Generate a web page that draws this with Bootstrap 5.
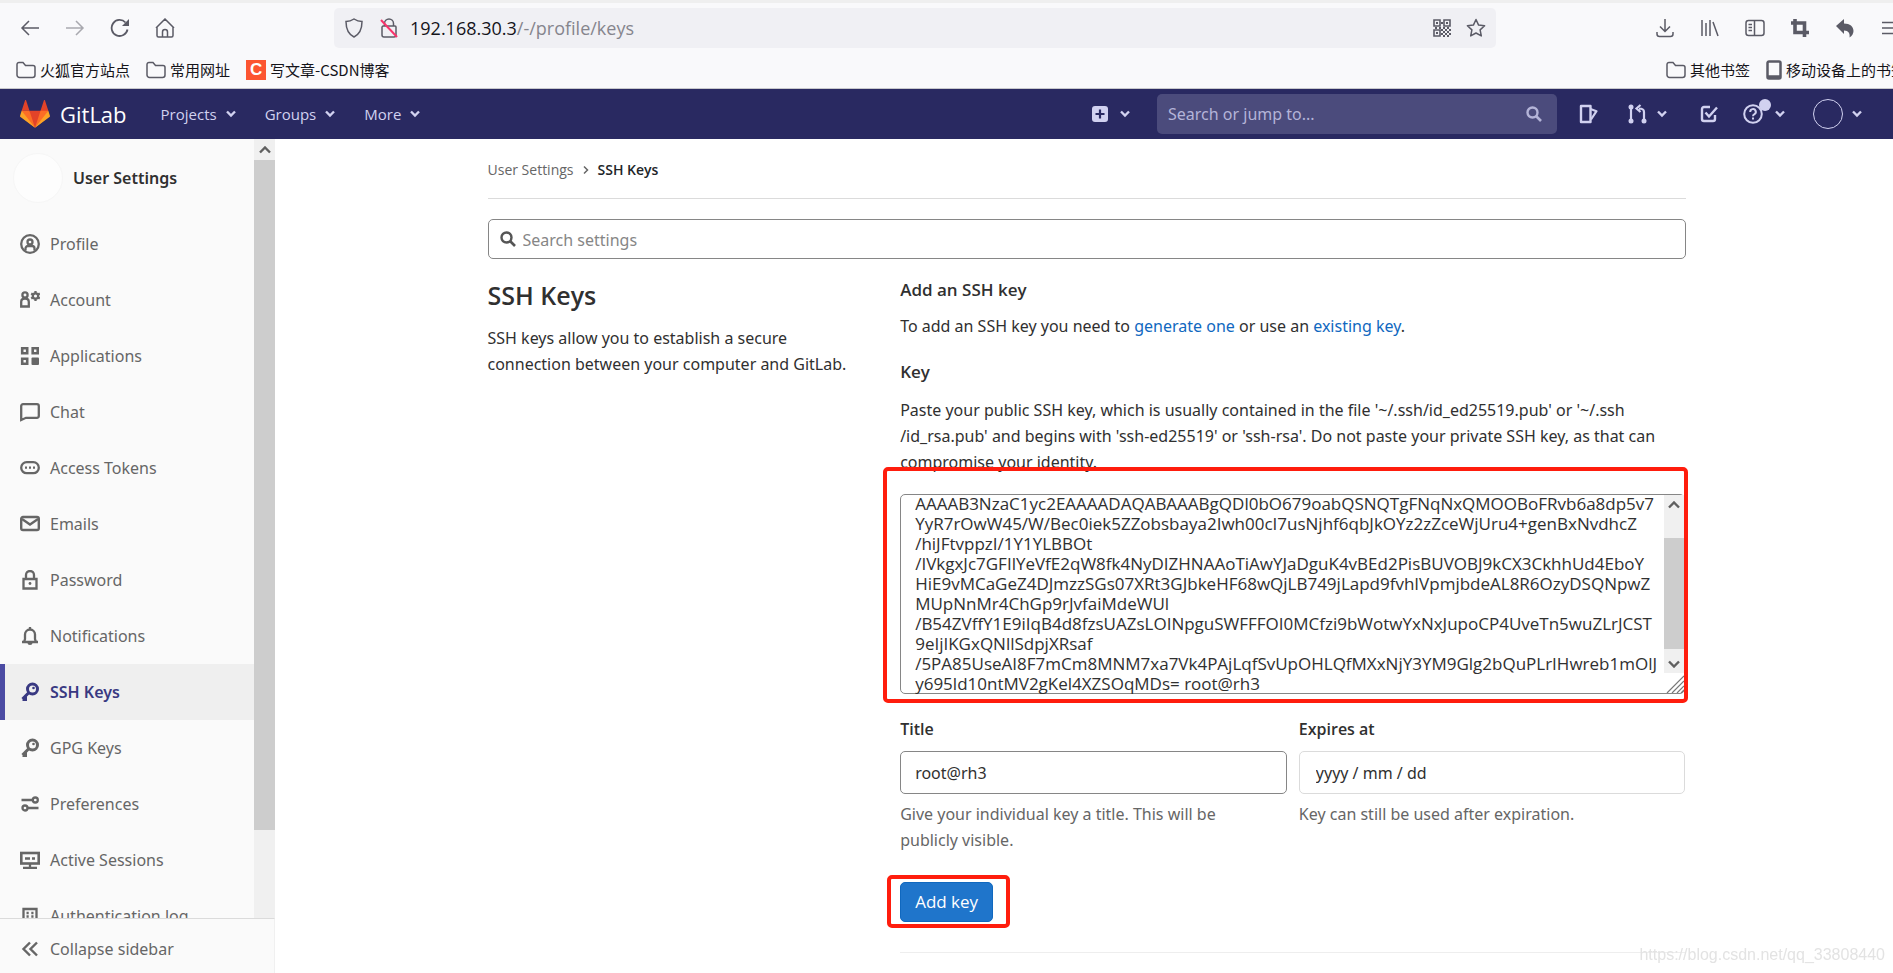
<!DOCTYPE html>
<html lang="en">
<head>
<meta charset="utf-8">
<meta name="viewport" content="width=device-width, initial-scale=1">
<title>SSH Keys · User Settings · GitLab</title>
<link href="https://cdn.jsdelivr.net/npm/bootstrap@5.3.0/dist/css/bootstrap.min.css" rel="stylesheet">
<style>
  :root { --ui: "Open Sans", "Noto Sans CJK SC", sans-serif; --prose: "Noto Sans", "Open Sans", sans-serif; --ink: #303030; --muted: #666; }
  body { font-family: var(--ui); font-size: 16px; line-height: 26px; color: var(--ink); height: 100vh; overflow: hidden; background: #fff; }
  svg { display: block; flex: none; fill: none; stroke: currentColor; stroke-width: 2; }
  button, a { color: inherit; }
  .plain { background: none; border: 0; padding: 0; text-decoration: none; }

  /* browser chrome */
  .chrome { background: #f9f9fb; border-top: 3px solid #efefef; border-bottom: 1px solid #c8c8cc; color: #5b5b66; height: 89px; }
  .chrome svg { stroke-width: 1.5; }
  .tools { height: 50px; padding-left: 20px; }
  .tools-start { gap: 25px; }
  .tools-end { gap: 25px; }
  .address { background: #f0f0f4; border-radius: 5px; height: 40px; margin: 0 159px; padding: 0 10px; min-width: 0; gap: 15px; }
  .address-text { font-size: 18px; margin-left: -4px; }
  .url-host { color: #15141a; }
  .url-path { color: #85858d; }
  .marks { font-family: "Noto Sans CJK SC", sans-serif; font-size: 15px; line-height: 22px; color: #15141a; padding: 6px 0 0 16px; }
  .marks svg { color: #5b5b66; }
  .marks a { gap: 4px; }
  .mobile-mark { width: 127px; overflow: hidden; }
  .csdn { width: 20px; height: 20px; background: #fc5531; color: #fff; font: bold 17px/20px "Liberation Sans", sans-serif; text-align: center; }

  /* top bar */
  .topbar { background: #292961; color: #d1d1f0; height: 50px; font-size: 15px; padding: 0 31px 0 20px; }
  .brand { color: #fff; font-size: 22px; font-weight: 500; gap: 10px; margin-right: 34px; }
  .topmenu { gap: 29px; }
  .topmenu .plain { gap: 9px; }
  .quick { gap: 12px; }
  .jump { background: #4b4b7c; border-radius: 5px; width: 400px; height: 40px; padding: 0 15px 0 11px; margin: 0 22px 0 27px; }
  .jump input { background: none; border: 0; outline: 0; color: #fff; font-family: var(--prose); font-size: 16px; padding: 0; min-width: 0; }
  .jump input::placeholder { color: #b4b4d8; opacity: 1; }
  .jump svg { color: #b4b4d8; }
  .merge, .todo { margin-left: 28px; }
  .account { margin-left: 25px; gap: 9px; }
  .avatar-ring { width: 30px; height: 30px; border: 1px solid #d1d1f0; border-radius: 50%; margin-left: 3px; }
  .dot { width: 12px; height: 12px; background: #d1d1f0; border-radius: 50%; top: -5px; right: -8px; }

  /* sidebar */
  .side { width: 275px; background: #fafafa; color: var(--muted); font-family: var(--prose); }
  .side svg { stroke-width: 2.3; }
  .side-head { height: 77px; padding: 0 13px; gap: 10px; color: var(--ink); font-weight: 600; }
  .side-avatar { width: 50px; height: 50px; background: #fdfdfd; border: 1px solid #f6f6f6; border-radius: 50%; }
  .side .nav-link { height: 56px; padding: 0 20px; gap: 10px; color: var(--muted); }
  .side .nav-link.active { background: #efefef; color: #393982; font-weight: 600; border-left: 5px solid #4b4ba3; padding-left: 15px; }
  .collapse-bar { height: 55px; border-top: 1px solid #dbdbdb; border-right: 1px solid #f0f0f0; padding: 5px 20px 0; gap: 10px; color: var(--muted); background: #fafafa; }
  .scroll { background: #f0f0f0; color: #606060; flex: none; }
  .scroll-side { width: 21px; }
  .scroll-side .thumb { background: #cdcdcd; height: 86%; }
  .scroll-btn { height: 21px; display: grid; place-items: center; }

  /* content */
  .content { --bs-gutter-x: 40px; max-width: 1238px; }
  .sections { --bs-gutter-x: 40px; font-family: var(--prose); }
  .main { padding-left: 5px; }
  .breadcrumb { --bs-breadcrumb-margin-bottom: 0; font-size: 14px; line-height: 20px; padding: 21px 0 18px; border-bottom: 1px solid #dbdbdb; gap: 8px; color: var(--muted); }
  .boxed { border: 1px solid #868686; border-radius: 5px; background: #fff; }
  .find { height: 40px; margin: 20px 0 18px; padding: 0 11px; gap: 7px; }
  .find input { border: 0; outline: 0; padding: 2px 0 0; font-family: var(--prose); }
  .find input::placeholder { color: #868686; opacity: 1; }
  h1 { font-family: var(--ui); font-size: 25px; line-height: 30px; font-weight: 600; margin: 3px 0 15px; }
  h2, label { font-family: var(--ui); font-size: 17px; line-height: 26px; font-weight: 600; }
  h2 { margin: 0 0 10px; }
  .text-link { color: #1068bf; text-decoration: none; }
  .key-box { height: 200px; margin: 19px 0 22px; }
  .key-box textarea { border: 0; outline: 0; resize: none; overflow: hidden; white-space: pre; margin: -1px 0; padding: 0 0 0 14px; font-family: var(--ui); font-size: 17px; line-height: 20px; color: var(--ink); background: none; min-width: 0; }
  .scroll-key { width: 20px; margin-bottom: 20px; }
  .scroll-key .thumb { background: #cdcdcd; height: 111px; margin-top: 24px; }
  .scroll-key .scroll-btn { height: 19px; }
  .grip { right: 0; bottom: 0; color: #777; }
  .outline-red { border: 4px solid #ff1d0d; border-radius: 5px; pointer-events: none; }
  .around-key { inset: -28px -4px -10px -18px; }
  .around-add { inset: -7px -17px -6px -13px; }
  .fields { --bs-gutter-x: 12px; }
  .fields label { font-size: 16px; }
  .fields input { height: 43px; padding: 0 14px; width: 100%; color: var(--ink); margin: 9px 0 7px; display: block; }
  .fields .soft { border-color: #dbdbdb; padding-left: 16px; }
  .hint { color: var(--muted); }
  .add-slot { margin-top: 29px; }
  .add { background: #1f75cb; border: 1px solid #1068bf; border-radius: 5px; color: #fff; height: 40px; padding: 0 14px; font-family: var(--ui); font-size: 17px; }
  .rule { border-top: 1px solid #eee; margin-top: 30px; }
  .watermark { right: 8px; bottom: 5px; font: 16px/26px "Liberation Sans", sans-serif; color: #e3e3e3; }
</style>
</head>
<body class="d-flex flex-column">

<svg width="0" height="0" class="position-absolute">
  <symbol id="down" viewBox="0 0 10 8"><path d="M1 1.500l4 4 4-4" stroke-width="2.400"/></symbol>
  <symbol id="lens" viewBox="0 0 16 16"><circle cx="6.500" cy="6.500" r="5" stroke-width="2.400"/><path d="M10 10l5 5" stroke-width="2.600"/></symbol>
  <symbol id="folder" viewBox="0 0 20 18"><path d="M1 14V3.500a2 2 0 0 1 2-2h4l2.500 3H17a2 2 0 0 1 2 2V14a2.500 2.500 0 0 1-2.500 2.500h-13A2.500 2.500 0 0 1 1 14z"/></symbol>
  <symbol id="keyicon" viewBox="0 0 20 20"><circle cx="12.500" cy="7" r="5" stroke-width="3"/><circle cx="13.500" cy="6" r="1.300" fill="currentColor" stroke="none"/><path d="M8.700 10.700L2.500 17M2.500 17.500h3v-3" stroke-width="3"/></symbol>
</svg>

<header class="chrome flex-shrink-0">
  <div class="tools d-flex align-items-center">
    <div class="tools-start d-flex">
      <button class="plain" aria-label="Back"><svg width="20" height="20"><path d="M19 10H2M9 3L2 10l7 7"/></svg></button>
      <button class="plain opacity-50" aria-label="Forward"><svg width="20" height="20"><path d="M1 10h17M11 3l7 7-7 7"/></svg></button>
      <button class="plain" aria-label="Reload"><svg width="20" height="20"><path d="M17.500 11.500A8 8 0 1 1 15.500 4.500" stroke-width="1.800"/><path d="M19 1v7h-7z" fill="currentColor" stroke="none"/></svg></button>
      <button class="plain" aria-label="Home"><svg width="20" height="20"><path d="M2 9v8.500a1.500 1.500 0 0 0 1.500 1.500h13a1.500 1.500 0 0 0 1.500-1.500V9M1 10l9-9 9 9M7.500 19v-5a2.500 2.500 0 0 1 5 0v5"/></svg></button>
    </div>
    <div class="address flex-grow-1 d-flex align-items-center">
      <svg width="20" height="20"><path d="M10 1c3 2 6 2.500 8 2.500 0 8-3 13-8 15.500C5 16.500 2 11.500 2 3.500 4 3.500 7 3 10 1z"/></svg>
      <svg width="20" height="20"><path d="M5.500 8V5.500a4.500 4.500 0 0 1 9 0V8M4 8h12a1 1 0 0 1 1 1v8a2 2 0 0 1-2 2H5a2 2 0 0 1-2-2V9z"/><path d="M2 2l16 17" stroke="#f9336b" stroke-width="2"/></svg>
      <div class="address-text flex-grow-1 text-nowrap"><span class="url-host">192.168.30.3</span><span class="url-path">/-/profile/keys</span></div>
      <button class="plain" aria-label="QR code"><svg width="18" height="18"><path d="M1 1h6v6H1zM11 1h6v6h-6zM1 11h6v6H1z" stroke-width="1.600"/><path d="M3 3h2v2H3zM13 3h2v2h-2zM3 13h2v2H3zM8 3h2v2H8zM2 8h2v2H2zM6 8h2v2H6zM10 8h2v2h-2zM14 8h2v2h-2zM8 10h2v2H8zM12 10h2v2h-2zM16 10h2v2h-2zM10 12h2v2h-2zM14 12h2v2h-2zM8 14h2v2H8zM12 14h2v2h-2zM16 14h2v2h-2zM10 16h2v2h-2zM14 16h2v2h-2z" fill="currentColor" stroke="none"/></svg></button>
      <button class="plain" aria-label="Bookmark"><svg width="20" height="20"><path d="M10 1.500l2.600 5.600 6 .7-4.500 4.100 1.200 6L10 15l-5.300 2.900 1.200-6L1.400 7.800l6-.7z" stroke-linejoin="round"/></svg></button>
    </div>
    <div class="tools-end d-flex">
      <button class="plain" aria-label="Downloads"><svg width="20" height="20"><path d="M10 1v12M5 8.500l5 5 5-5M2 14v2a2.500 2.500 0 0 0 2.500 2.500h11A2.500 2.500 0 0 0 18 16v-2"/></svg></button>
      <button class="plain" aria-label="Library"><svg width="20" height="20"><path d="M2 2v16M6 5v13M10 2v16M13 4l5 14"/></svg></button>
      <button class="plain" aria-label="Sidebars"><svg width="20" height="20"><rect x="1" y="2.500" width="18" height="15" rx="2.500"/><path d="M9.500 3v14M3.500 6.500h3.500M3.500 9.500h3.500M3.500 12.500h3.500"/></svg></button>
      <button class="plain" aria-label="Screenshot"><svg width="20" height="20"><path d="M5 1v13.500h14M1 5h13.500v14" stroke-width="3.600"/></svg></button>
      <button class="plain" aria-label="Undo"><svg width="20" height="20"><path d="M1 8l8-7v4.500c6 0 9.500 3 9.500 7.500 0 2.500-1.500 5-4 6.500.8-4-1-7-5.500-7V16z" fill="currentColor" stroke="none"/></svg></button>
      <button class="plain" aria-label="Menu"><svg width="13" height="20"><path d="M2 4.500h11M2 10h11M2 15.500h11"/></svg></button>
    </div>
  </div>
  <nav class="marks d-flex align-items-center text-nowrap" aria-label="Bookmarks">
    <a href="#" class="plain d-flex align-items-center me-3"><svg width="20" height="18"><use href="#folder"/></svg>火狐官方站点</a>
    <a href="#" class="plain d-flex align-items-center me-3"><svg width="20" height="18"><use href="#folder"/></svg>常用网址</a>
    <a href="#" class="plain d-flex align-items-center me-auto"><span class="csdn">C</span>写文章-CSDN博客</a>
    <a href="#" class="plain d-flex align-items-center me-3"><svg width="20" height="18"><use href="#folder"/></svg>其他书签</a>
    <a href="#" class="plain d-flex align-items-center mobile-mark"><svg width="16" height="20"><path d="M3 1.500h10a1.500 1.500 0 0 1 1.500 1.500v14a1.500 1.500 0 0 1-1.500 1.500H3A1.500 1.500 0 0 1 1.500 17V3A1.500 1.500 0 0 1 3 1.500zM2 16.500h12" stroke-width="2.500"/></svg>移动设备上的书签</a>
  </nav>
</header>

<nav class="topbar d-flex align-items-center flex-shrink-0" aria-label="Main">
  <a href="#" class="plain brand d-flex align-items-center">
    <svg width="30" height="30" viewBox="0 0 36 36"><g stroke="none"><path fill="#e24329" d="M2 14l9.380 9v-9l-4-12.280c-.205-.632-1.176-.632-1.380 0zM34 14l-9.380 9v-9l4-12.280c.205-.632 1.176-.632 1.380 0zM18 34.380L3 14h30z"/><path fill="#fc6d26" d="M18 34.380L11.380 14H2l4 11zM18 34.380L24.620 14H34l-4 11z"/><path fill="#fca326" d="M2 14L.1 20.160c-.18.565 0 1.200.5 1.560l17.420 12.660zM34 14l1.900 6.160c.18.565 0 1.200-.5 1.560L18 34.380z"/></g></svg>
    GitLab</a>
  <div class="topmenu d-flex me-auto">
    <button class="plain d-flex align-items-center">Projects <svg width="10" height="8"><use href="#down"/></svg></button>
    <button class="plain d-flex align-items-center">Groups <svg width="10" height="8"><use href="#down"/></svg></button>
    <button class="plain d-flex align-items-center">More <svg width="10" height="8"><use href="#down"/></svg></button>
  </div>
  <button class="plain quick d-flex align-items-center" aria-label="New"><svg width="16" height="16"><rect width="16" height="16" rx="3" fill="currentColor" stroke="none"/><path d="M8 3.500v9M3.500 8h9" stroke="#292961" stroke-width="2.200"/></svg><svg width="10" height="8"><use href="#down"/></svg></button>
  <div class="jump d-flex align-items-center"><input class="flex-grow-1" type="text" placeholder="Search or jump to..." aria-label="Search or jump to"><svg width="16" height="16"><use href="#lens"/></svg></div>
  <button class="plain" aria-label="Issues"><svg width="20" height="20"><path d="M2 2h9.500v16H2z" stroke-linejoin="round" stroke-width="2.400"/><path d="M11.500 5l6 2.200L12 15.500" stroke-width="2.200" stroke-linejoin="round"/></svg></button>
  <button class="plain merge d-flex align-items-center gap-2" aria-label="Merge requests"><svg width="22" height="20"><path d="M4 3v14M17 17V8q0-3.500-5-3.500M13.500 1l-4 3.500 4 3.500" stroke-width="2.200"/><g fill="currentColor" stroke="none"><circle cx="4" cy="3" r="2.500"/><circle cx="4" cy="17" r="2.500"/><circle cx="17" cy="17" r="2.500"/></g></svg><svg width="10" height="8"><use href="#down"/></svg></button>
  <button class="plain todo" aria-label="To-Do List"><svg class="ms-1" width="20" height="20"><path d="M11 3H5a2 2 0 0 0-2 2v10a2 2 0 0 0 2 2h9a2 2 0 0 0 2-2v-4M6.500 8.500l3.500 4L18 3.500" stroke-width="2.400"/></svg></button>
  <button class="plain d-flex align-items-center gap-2 ms-4" aria-label="Help"><span class="position-relative"><svg width="20" height="20"><circle cx="10" cy="10" r="8.800"/><path d="M7.200 8a2.800 2.800 0 1 1 4.300 2.200Q10 11 10 12.200M10 13.500v2"/></svg><span class="dot position-absolute"></span></span><svg class="ms-1" width="10" height="8"><use href="#down"/></svg></button>
  <button class="plain account d-flex align-items-center" aria-label="Account menu"><span class="avatar-ring"></span><svg width="10" height="8"><use href="#down"/></svg></button>
</nav>

<div class="d-flex flex-grow-1 overflow-hidden">
  <aside class="side d-flex flex-column flex-shrink-0">
    <div class="d-flex flex-grow-1 overflow-hidden">
      <div class="flex-grow-1 overflow-hidden">
        <div class="side-head d-flex align-items-center"><span class="side-avatar"></span>User Settings</div>
        <nav class="nav flex-column flex-nowrap text-nowrap" aria-label="User settings">
          <a class="nav-link d-flex align-items-center" href="#"><svg width="20" height="20"><circle cx="10" cy="10" r="8.800"/><circle cx="10" cy="8" r="2.500"/><path d="M5.500 16.500v-2a2.500 2.500 0 0 1 2.500-2.500h4a2.500 2.500 0 0 1 2.500 2.500v2"/></svg>Profile</a>
          <a class="nav-link d-flex align-items-center" href="#"><svg width="20" height="20"><circle cx="5" cy="5" r="2.600"/><path d="M1.200 16.500v-4.500q0-3.500 3.800-3.500t3.800 3.500v4.500z"/><circle cx="15.500" cy="6" r="2.700"/><path d="M15.500 1v2M15.500 9v2M11.200 3.500l1.700 1M18.100 7.500l1.700 1M11.200 8.500l1.700-1M18.100 4.500l1.700-1"/></svg>Account</a>
          <a class="nav-link d-flex align-items-center" href="#"><svg width="20" height="20"><path d="M2.200 2.200h5v5h-5zM12.700 2.200h5v5h-5zM2.200 12.700h5v5h-5z" stroke-width="2.600"/><rect x="11.500" y="11.500" width="7.500" height="7.500" rx="1" fill="currentColor" stroke="none"/></svg>Applications</a>
          <a class="nav-link d-flex align-items-center" href="#"><svg width="20" height="20"><path d="M1.200 18V4a1.800 1.800 0 0 1 1.800-1.800h14A1.800 1.800 0 0 1 18.800 4v10a1.800 1.800 0 0 1-1.800 1.800H6z"/></svg>Chat</a>
          <a class="nav-link d-flex align-items-center" href="#"><svg width="20" height="20"><rect x="1.200" y="4.200" width="17.600" height="11" rx="5.500"/><path d="M5 9.700h2M9 9.700h2M13 9.700h2"/></svg>Access Tokens</a>
          <a class="nav-link d-flex align-items-center" href="#"><svg width="20" height="20"><rect x="1.200" y="3" width="17.600" height="13" rx="1.800" stroke-width="2.400"/><path d="M2 5l8 5.500L18 5"/></svg>Emails</a>
          <a class="nav-link d-flex align-items-center" href="#"><svg width="20" height="20"><path d="M3.500 9h13v9.500h-13zM6 9V5a4 4 0 0 1 8 0v4"/><circle cx="10" cy="13.500" r="1.400" fill="currentColor" stroke="none"/></svg>Password</a>
          <a class="nav-link d-flex align-items-center" href="#"><svg width="20" height="20"><path d="M2 16h16M4 16l1-3V8.500a5 5 0 0 1 10 0V13l1 3M10 1v2.500"/><path d="M7.500 17h5a2.500 2 0 0 1-5 0z" fill="currentColor" stroke="none"/></svg>Notifications</a>
          <a class="nav-link d-flex align-items-center active" aria-current="page" href="#"><svg width="20" height="20"><use href="#keyicon"/></svg>SSH Keys</a>
          <a class="nav-link d-flex align-items-center" href="#"><svg width="20" height="20"><use href="#keyicon"/></svg>GPG Keys</a>
          <a class="nav-link d-flex align-items-center" href="#"><svg width="20" height="20"><path d="M1.500 6h11M8 14h10.500"/><circle cx="15.300" cy="6" r="2.500"/><circle cx="5" cy="14" r="2.500"/></svg>Preferences</a>
          <a class="nav-link d-flex align-items-center" href="#"><svg width="20" height="20"><rect x="1.300" y="3" width="17.400" height="10.500" stroke-width="2.600"/><path d="M5 8.500h5M12 8.500h3M10 14v3M3 17.800h14"/></svg>Active Sessions</a>
          <a class="nav-link d-flex align-items-center" href="#"><svg width="20" height="20"><path d="M3.500 3h13v16h-13z"/><path d="M6.500 7h2.200M11.300 7h2.200M6.500 10.500h2.200M11.300 10.500h2.200"/></svg>Authentication log</a>
        </nav>
      </div>
      <div class="scroll scroll-side" aria-hidden="true"><div class="scroll-btn"><svg width="12" height="8"><path d="M1 6.500l5-5 5 5" stroke-width="2.400"/></svg></div><div class="thumb"></div></div>
    </div>
    <button class="plain collapse-bar d-flex align-items-center flex-shrink-0"><svg width="20" height="20"><path d="M10 3.500L3.500 10l6.500 6.500M17 3.500L10.500 10l6.500 6.500" stroke-width="2.400"/></svg>Collapse sidebar</button>
  </aside>

  <main class="main flex-grow-1">
    <div class="content container-fluid">
      <nav class="breadcrumb align-items-center" aria-label="Breadcrumb"><a class="plain" href="#">User Settings</a><svg width="8" height="10"><path d="M2 1.500L5.500 5 2 8.500" stroke-width="1.500"/></svg><a class="plain fw-semibold text-dark" href="#">SSH Keys</a></nav>
      <div class="find boxed d-flex align-items-center"><svg width="16" height="16" color="#555"><use href="#lens"/></svg><input class="flex-grow-1" type="search" placeholder="Search settings" aria-label="Search settings"></div>
      <div class="row sections">
        <div class="col-4">
          <h1>SSH Keys</h1>
          <p>SSH keys allow you to establish a secure connection between your computer and GitLab.</p>
        </div>
        <form class="col-8" onsubmit="return false">
          <h2>Add an SSH key</h2>
          <p class="mb-0">To add an SSH key you need to <a class="text-link" href="#">generate one</a> or use an <a class="text-link" href="#">existing key</a>.</p>
          <label class="d-block mt-3 pt-1" for="key">Key</label>
          <div class="mt-2 pt-1">Paste your public SSH key, which is usually contained in the file '~/.ssh/id_ed25519.pub' or '~/.ssh<br>/id_rsa.pub' and begins with 'ssh-ed25519' or 'ssh-rsa'. Do not paste your private SSH key, as that can compromise your identity.</div>
          <div class="key-box boxed d-flex position-relative">
            <textarea id="key" class="flex-grow-1" spellcheck="false">AAAAB3NzaC1yc2EAAAADAQABAAABgQDl0bO679oabQSNQTgFNqNxQMOOBoFRvb6a8dp5v7
YyR7rOwW45/W/Bec0iek5ZZobsbaya2Iwh00cI7usNjhf6qbJkOYz2zZceWjUru4+genBxNvdhcZ
/hiJFtvppzI/1Y1YLBBOt
/IVkgxJc7GFIlYeVfE2qW8fk4NyDIZHNAAoTiAwYJaDguK4vBEd2PisBUVOBJ9kCX3CkhhUd4EboY
HiE9vMCaGeZ4DJmzzSGs07XRt3GJbkeHF68wQjLB749jLapd9fvhIVpmjbdeAL8R6OzyDSQNpwZ
MUpNnMr4ChGp9rJvfaiMdeWUl
/B54ZVffY1E9iIqB4d8fzsUAZsLOINpguSWFFFOI0MCfzi9bWotwYxNxJupoCP4UveTn5wuZLrJCST
9eIjIKGxQNllSdpjXRsaf
/5PA85UseAI8F7mCm8MNM7xa7Vk4PAjLqfSvUpOHLQfMXxNjY3YM9Glg2bQuPLrIHwreb1mOlJ
y695ld10ntMV2gKel4XZSOqMDs= root@rh3</textarea>
            <div class="scroll scroll-key d-flex flex-column" aria-hidden="true"><div class="scroll-btn"><svg width="12" height="8"><path d="M1 6.500l5-5 5 5" stroke-width="2.400"/></svg></div><div class="thumb"></div><div class="scroll-btn mt-auto"><svg width="12" height="8"><path d="M1 1.500l5 5 5-5" stroke-width="2.400"/></svg></div></div>
            <svg class="grip position-absolute" width="18" height="18"><path d="M1 18L18 1M6 18L18 6M11 18l7-7M15 18l3-3" stroke-width="1.200"/></svg>
            <div class="outline-red around-key position-absolute"></div>
          </div>
          <div class="row fields">
            <div class="col-6"><label for="title">Title</label><input class="boxed" id="title" type="text" value="root@rh3"><div class="hint pe-5">Give your individual key a title. This will be publicly visible.</div></div>
            <div class="col-6"><label for="expires">Expires at</label><input class="boxed soft" id="expires" type="text" value="yyyy / mm / dd"><div class="hint">Key can still be used after expiration.</div></div>
          </div>
          <div class="d-flex add-slot"><div class="position-relative"><button class="add d-block" type="submit">Add key</button><div class="outline-red around-add position-absolute"></div></div></div>
          <div class="rule"></div>
        </form>
      </div>
    </div>
  </main>
</div>
<div class="watermark position-fixed">https://blog.csdn.net/qq_33808440</div>
<script src="https://cdn.jsdelivr.net/npm/bootstrap@5.3.0/dist/js/bootstrap.bundle.min.js"></script>
</body>
</html>
